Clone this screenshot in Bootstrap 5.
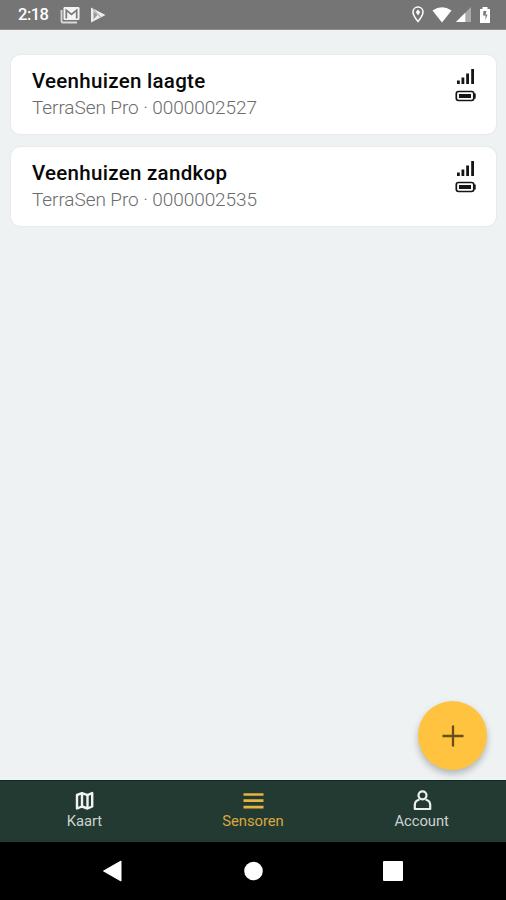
<!DOCTYPE html>
<html lang="nl">
<head>
<meta charset="utf-8">
<meta name="viewport" content="width=device-width, initial-scale=1">
<title>Sensoren</title>
<link href="https://cdn.jsdelivr.net/npm/bootstrap@5.3.0/dist/css/bootstrap.min.css" rel="stylesheet">
<style>
body{font-family:Roboto,"Liberation Sans",sans-serif;background:#eef2f2}
svg{display:block;flex:none}
.screen{height:900px;width:506px}
.status{height:30px;background:#757575;padding:0 15px 0 18px;border-bottom:1px solid #8d8d8d}
.clock{font-size:16.5px;font-weight:500;line-height:30px;width:42px;letter-spacing:-.5px}
.sensors{padding:25px 10px 0 11px;gap:13px}
.sensor{height:79px;border:0;border-radius:9px;padding:13px 20px 0 21px;box-shadow:0 0 2px rgba(60,80,75,.14)}
.sensor-name{font-size:20.5px;line-height:26px;font-weight:500;color:#080808;letter-spacing:.29px;margin:0}
.sensor-id{font-size:19px;line-height:27px;font-weight:300;color:#6c6c6c;letter-spacing:-.08px;margin:0}
.fab{position:absolute;right:19px;bottom:10px;width:69px;height:69px;background:#ffc33f;border:0;box-shadow:0 4px 7px rgba(0,0,0,.25)}
.tabs{height:62px;background:#223a32;border-top:1px solid #132a23}
.tab-link{color:#ccd3cf;font-size:14.8px;line-height:19px;font-weight:400;padding-top:9px;letter-spacing:-.05px}
.tab-link.active{color:#d9a83f}
.system{height:58px;padding:0 43px}
</style>
</head>
<body>
<div class="screen d-flex flex-column overflow-hidden">
  <header class="status d-flex align-items-center text-white">
    <span class="clock">2:18</span>
    <svg width="20" height="18" viewBox="0 0 20 18"><path d="M1.500 4v11.200q0 1.300 1.300 1.300H17" fill="none" stroke="#d8d8d8" stroke-width="1.800"/><rect x="3.500" y="1" width="16" height="13" rx="1.200" fill="#f4f4f4"/><path d="M6.300 12.500V4.200l5.200 4.200 5.200-4.200v8.300" fill="none" stroke="#777" stroke-width="1.700"/></svg>
    <svg class="ms-2" width="20" height="18" viewBox="-1 0 20 18"><path d="M2 1.500v15L16.500 9z" fill="#eee"/><path d="M4.500 5 8.500 9l-4 4.500z" fill="#999"/><path d="M4 3.200 12 11.500" stroke="#999" stroke-width="1"/></svg>
    <div class="d-flex align-items-center ms-auto">
      <svg width="12" height="17" viewBox="0 0 12 17"><path d="M6 1C3.200 1 1 3.200 1 6c0 3.500 5 9.600 5 9.600S11 9.500 11 6c0-2.800-2.200-5-5-5z" fill="none" stroke="#fff" stroke-width="1.500"/><path d="M6 3.500 8.200 6 6 9.500 3.800 6z" fill="#fff"/></svg>
      <svg class="ms-2 me-1" width="20" height="16" viewBox="0 0 20 16"><path d="M.5 3.500Q10-2.800 19.500 3.500L10 15.500z" fill="#fff"/></svg>
      <svg width="15" height="16" viewBox="0 0 15 16"><path d="M15 0v15H0z" fill="#aaa"/><path d="M9.300 5.700V15H0z" fill="#fff"/></svg>
      <svg class="ms-2" width="12" height="18" viewBox="0 0 12 18"><path d="M1 3h2.500V1h5v2H11v14H1z" fill="#fff"/><path d="M7.500 5H4.500L4 9.500h2.500V14L8.500 8.500H6.500z" fill="#777"/></svg>
    </div>
  </header>
  <main class="position-relative flex-grow-1">
    <div class="sensors d-flex flex-column">
      <article class="sensor card flex-row justify-content-between">
        <div><h2 class="sensor-name">Veenhuizen laagte</h2><p class="sensor-id">TerraSen Pro · 0000002527</p></div>
        <svg width="21" height="35" viewBox="0 0 21 35"><path d="M2 12.500h2.800v3.500H2zM6.500 9.500h2.800V16H6.500zM11.200 5.500H14V16h-2.800zM16.200 1H19v15h-2.800z" fill="#151515"/><rect x="1.300" y="23.500" width="17.500" height="9" rx="2.200" fill="none" stroke="#151515" stroke-width="1.700"/><path d="M4 26h12v4H4zM19 25.500h1.700v5H19z" fill="#151515"/></svg>
      </article>
      <article class="sensor card flex-row justify-content-between">
        <div><h2 class="sensor-name">Veenhuizen zandkop</h2><p class="sensor-id">TerraSen Pro · 0000002535</p></div>
        <svg width="21" height="35" viewBox="0 0 21 35"><path d="M2 12.500h2.800v3.500H2zM6.500 9.500h2.800V16H6.500zM11.200 5.500H14V16h-2.800zM16.200 1H19v15h-2.800z" fill="#151515"/><rect x="1.300" y="22.500" width="17.500" height="9" rx="2.200" fill="none" stroke="#151515" stroke-width="1.700"/><path d="M4 25h12v4H4zM19 24.500h1.700v5H19z" fill="#151515"/></svg>
      </article>
    </div>
    <button class="fab rounded-circle d-flex align-items-center justify-content-center p-0" aria-label="Sensor toevoegen">
      <svg width="22" height="22" viewBox="0 0 22 22"><path d="M11 .5v21M.5 11h21" stroke="#694e13" stroke-width="2.300"/></svg>
    </button>
  </main>
  <nav class="tabs row g-0 text-center">
    <a class="tab-link col d-flex flex-column align-items-center text-decoration-none" href="#">
      <svg width="20" height="22" viewBox="0 0 20 22"><path d="M3 5 8 3.200l5.500 2L18.200 3v13.500l-4.700 2-5.500-2-5 2z" fill="none" stroke="#f2f4f3" stroke-width="2.400" stroke-linejoin="round"/><path d="M8 3.500v13M13.500 5.500v13" stroke="#f2f4f3" stroke-width="2.400"/></svg>
      <span>Kaart</span></a>
    <a class="tab-link active col d-flex flex-column align-items-center text-decoration-none" href="#">
      <svg width="21" height="22" viewBox="0 0 21 22"><path d="M.5 4.500h20M.5 10.700h20M.5 17.200h20" stroke="#e8b440" stroke-width="2.700"/></svg>
      <span>Sensoren</span></a>
    <a class="tab-link col d-flex flex-column align-items-center text-decoration-none" href="#">
      <svg width="20" height="22" viewBox="0 0 20 22"><circle cx="10.500" cy="5.300" r="4" fill="none" stroke="#edf0ee" stroke-width="2.200"/><path d="M7.500 9.500C4.200 10.300 2.800 12.500 2.800 15v4h15.400v-4c0-2.500-1.400-4.700-4.700-5.500" fill="none" stroke="#edf0ee" stroke-width="2.200" stroke-linejoin="round"/></svg>
      <span>Account</span></a>
  </nav>
  <footer class="system bg-black d-flex align-items-center">
    <div class="col d-flex justify-content-center"><svg width="20" height="22" viewBox="0 0 20 22"><path d="M18 1v20L.5 11z" fill="#fff" stroke="#fff" stroke-linejoin="round"/></svg></div>
    <div class="col d-flex justify-content-center"><svg width="20" height="20" viewBox="0 0 20 20"><circle cx="10.500" cy="10" r="9.300" fill="#fff"/></svg></div>
    <div class="col d-flex justify-content-center"><svg width="20" height="20" viewBox="0 0 20 20"><rect width="20" height="20" rx="1" fill="#fff"/></svg></div>
  </footer>
</div>
<script src="https://cdn.jsdelivr.net/npm/bootstrap@5.3.0/dist/js/bootstrap.bundle.min.js"></script>
</body>
</html>
